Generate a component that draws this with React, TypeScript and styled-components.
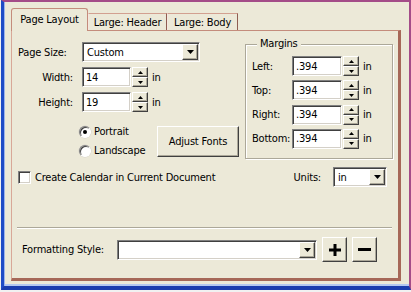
import React from 'react';
import styled, { createGlobalStyle, css } from 'styled-components';

const Global = createGlobalStyle`
  html, body { margin: 0; padding: 0; background: #F1F1F1; }
  body {
    font-family: "DejaVu Sans Condensed", "DejaVu Sans", sans-serif;
    font-stretch: condensed;
    font-size: 11px;
    letter-spacing: -0.2px;
    color: #000;
  }
  #root { width: 411px; height: 292px; overflow: hidden; }
`;

const sunken = css`
  box-sizing: border-box;
  border: 1px solid;
  border-color: #808080 #FFFFFF #FFFFFF #808080;
  box-shadow: inset 1px 1px 0 #404040, inset -1px -1px 0 #D4D0C8;
  background: #FFFFFF;
`;

const raised = css`
  box-sizing: border-box;
  border: 1px solid;
  border-color: #FFFFFF #404040 #404040 #FFFFFF;
  box-shadow: inset -1px -1px 0 #ACA899;
  background: #ECE9D8;
`;

const Frame = styled.div`
  box-sizing: border-box;
  width: 410px;
  height: 290px;
  margin-left: 1px;
  background: #ECE9D8;
  border-top: 2px solid #A44C88;
  border-right: 2px solid #A44C88;
  border-left: 3px solid #1F4CC6;
  border-bottom: 4px solid #1B3DAE;
  box-shadow: inset 1px 0 0 #9DB4EA, inset 0 -2px 0 #B4C8F0;
  display: flex;
  flex-direction: column;
  padding: 0 8px 0 7px;
`;

const TabStrip = styled.div`
  height: 28px;
  display: flex;
  align-items: flex-end;
  position: relative;
  z-index: 1;
`;

const Tab = styled.div<{ $active?: boolean; $w: number }>`
  box-sizing: border-box;
  width: ${p => p.$w}px;
  display: flex;
  align-items: center;
  justify-content: center;
  background: #ECE9D8;
  white-space: nowrap;
  ${p => p.$active ? css`
    height: 23px;
    margin-bottom: -1px;
    border: 1px solid #C48C7C;
    border-bottom: none;
    border-radius: 3px 3px 0 0;
    padding-bottom: 1px;
  ` : css`
    height: 17px;
    border-top: 1px solid #D2A090;
    border-left: 1px solid #F6E6DE;
    border-right: 1px solid #8E5E52;
    padding-top: 1px;
  `}
`;

const Panel = styled.div`
  box-sizing: border-box;
  width: 390px;
  height: 251px;
  border-top: 1px solid #C48C7C;
  border-left: 1px solid #D8A898;
  border-right: 3px solid #A66858;
  border-bottom: 3px solid #A66858;
  padding: 11px 5px 0 6px;
  display: flex;
  flex-direction: column;
`;

const TopArea = styled.div`
  display: flex;
  justify-content: space-between;
  align-items: flex-start;
`;

const LeftCol = styled.div`
  width: 221px;
  display: flex;
  flex-direction: column;
`;

const FormGrid = styled.div<{ $labelW: number; $gap: number }>`
  display: grid;
  grid-template-columns: ${p => p.$labelW}px auto;
  grid-auto-rows: 20px;
  row-gap: ${p => p.$gap}px;
  align-items: center;
`;

const Label = styled.span<{ $right?: boolean }>`
  justify-self: ${p => (p.$right ? 'end' : 'start')};
  padding-right: ${p => (p.$right ? '9px' : '0')};
  white-space: nowrap;
`;

const Field = styled.div`
  display: flex;
  align-items: center;
  height: 20px;
`;

const TextBox = styled.input<{ $w: number }>`
  ${sunken};
  width: ${p => p.$w}px;
  height: 20px;
  margin: 0;
  padding: 0 0 0 3px;
  font: inherit;
  font-stretch: condensed;
  letter-spacing: -0.2px;
  color: #000;
  outline: none;
`;

const Spin = styled.div`
  display: flex;
  flex-direction: column;
  margin-left: 1px;
  width: 16px;
  height: 20px;
`;

const SpinBtn = styled.div`
  ${raised};
  height: 10px;
  display: flex;
  align-items: center;
  justify-content: center;
`;

const Unit = styled.span`
  margin-left: 4px;
`;

const Combo = styled.div<{ $w: number }>`
  ${sunken};
  width: ${p => p.$w}px;
  height: 20px;
  padding: 1px;
  display: flex;
  align-items: stretch;
`;

const ComboText = styled.span`
  flex: 1;
  display: flex;
  align-items: center;
  padding-left: 3px;
  white-space: nowrap;
`;

const DropBtn = styled.div`
  ${raised};
  width: 16px;
  display: flex;
  align-items: center;
  justify-content: center;
`;

const Orientation = styled.div`
  margin-top: 10px;
  display: flex;
  align-items: center;
  justify-content: space-between;
`;

const RadioGroup = styled.div`
  margin-left: 61px;
  display: flex;
  flex-direction: column;
`;

const OptionRow = styled.label`
  height: 19px;
  display: flex;
  align-items: center;
  gap: 3px;
  white-space: nowrap;
`;

const Radio = styled.span<{ $checked?: boolean }>`
  box-sizing: border-box;
  width: 12px;
  height: 12px;
  border-radius: 50%;
  background: #FFFFFF;
  border: 1px solid;
  border-color: #808080 #FFFFFF #FFFFFF #808080;
  box-shadow: inset 1px 1px 0 #404040, 0 0 0 0.5px #D4D0C8;
  display: flex;
  align-items: center;
  justify-content: center;
  &::after {
    content: '';
    width: 4px;
    height: 4px;
    border-radius: 50%;
    background: ${p => (p.$checked ? '#000' : 'transparent')};
  }
`;

const PushButton = styled.div<{ $w: number; $h: number }>`
  ${raised};
  width: ${p => p.$w}px;
  height: ${p => p.$h}px;
  display: flex;
  align-items: center;
  justify-content: center;
  white-space: nowrap;
`;

const GroupBox = styled.div`
  box-sizing: border-box;
  width: 148px;
  height: 115px;
  margin-top: 2px;
  border: 1px solid #ACA899;
  box-shadow: 1px 1px 0 #FFFFFF, inset 1px 1px 0 #FFFFFF;
  display: flex;
  flex-direction: column;
`;

const Legend = styled.span`
  align-self: flex-start;
  margin: -8px 0 0 11px;
  padding: 0 3px;
  height: 13px;
  line-height: 13px;
  background: #ECE9D8;
`;

const MarginArea = styled.div`
  margin-top: 6px;
  padding-left: 6px;
`;

const CheckRow = styled.div`
  margin-top: 7px;
  height: 20px;
  display: flex;
  align-items: center;
`;

const CheckBox = styled.span`
  ${sunken};
  width: 13px;
  height: 13px;
`;

const CheckText = styled.span`
  margin-left: 4px;
  white-space: nowrap;
`;

const UnitsArea = styled.div`
  margin-left: auto;
  margin-right: 6px;
  display: flex;
  align-items: center;
  gap: 12px;
`;

const Separator = styled.div`
  margin: 40px 1px 0 -1px;
  height: 1px;
  background: #ACA899;
  border-bottom: 1px solid #FFFFFF;
`;

const FormatRow = styled.div`
  margin-top: 8px;
  height: 25px;
  display: flex;
  align-items: center;
`;

const FormatLabel = styled.span`
  width: 95px;
  margin-left: 4px;
  white-space: nowrap;
`;

const IconBtn = styled(PushButton)`
  margin-left: 5px;
`;

const Arrow = ({ w, h }: { w: number; h: number }) => (
  <svg width={w} height={h} viewBox={`0 0 ${w} ${h}`}>
    <polygon points={`0,0 ${w},0 ${w / 2},${h}`} fill="#000" />
  </svg>
);

const UpArrow = () => (
  <svg width={5} height={3} viewBox="0 0 5 3">
    <polygon points="0,3 5,3 2.5,0" fill="#000" />
  </svg>
);

const DownArrow = () => (
  <svg width={5} height={3} viewBox="0 0 5 3">
    <polygon points="0,0 5,0 2.5,3" fill="#000" />
  </svg>
);

const PlusIcon = () => (
  <svg width={12} height={12} viewBox="0 0 12 12">
    <rect x={0} y={4.5} width={12} height={3} fill="#000" />
    <rect x={4.5} y={0} width={3} height={12} fill="#000" />
  </svg>
);

const MinusIcon = () => (
  <svg width={13} height={3} viewBox="0 0 13 3">
    <rect x={0} y={0} width={13} height={3} fill="#000" />
  </svg>
);

const DropDown = ({ w, value }: { w: number; value: string }) => (
  <Combo $w={w}>
    <ComboText>{value}</ComboText>
    <DropBtn>
      <Arrow w={7} h={4} />
    </DropBtn>
  </Combo>
);

const Spinner = ({ w, value }: { w: number; value: string }) => (
  <Field>
    <TextBox $w={w} readOnly value={value} />
    <Spin>
      <SpinBtn><UpArrow /></SpinBtn>
      <SpinBtn><DownArrow /></SpinBtn>
    </Spin>
    <Unit>in</Unit>
  </Field>
);

const margins = ['Left:', 'Top:', 'Right:', 'Bottom:'];

export default function App() {
  return (
    <>
      <Global />
      <Frame>
        <TabStrip>
          <Tab $active $w={77}>Page Layout</Tab>
          <Tab $w={79}>Large: Header</Tab>
          <Tab $w={71}>Large: Body</Tab>
        </TabStrip>
        <Panel>
          <TopArea>
            <LeftCol>
              <FormGrid $labelW={64} $gap={5}>
                <Label>Page Size:</Label>
                <DropDown w={118} value="Custom" />
                <Label $right>Width:</Label>
                <Spinner w={49} value="14" />
                <Label $right>Height:</Label>
                <Spinner w={49} value="19" />
              </FormGrid>
              <Orientation>
                <RadioGroup>
                  <OptionRow><Radio $checked />Portrait</OptionRow>
                  <OptionRow><Radio />Landscape</OptionRow>
                </RadioGroup>
                <PushButton $w={82} $h={31}>Adjust Fonts</PushButton>
              </Orientation>
            </LeftCol>
            <GroupBox>
              <Legend>Margins</Legend>
              <MarginArea>
                <FormGrid $labelW={40} $gap={4.33}>
                  {margins.map(m => (
                    <React.Fragment key={m}>
                      <Label>{m}</Label>
                      <Spinner w={50} value=".394" />
                    </React.Fragment>
                  ))}
                </FormGrid>
              </MarginArea>
            </GroupBox>
          </TopArea>
          <CheckRow>
            <CheckBox />
            <CheckText>Create Calendar in Current Document</CheckText>
            <UnitsArea>
              <span>Units:</span>
              <DropDown w={54} value="in" />
            </UnitsArea>
          </CheckRow>
          <Separator />
          <FormatRow>
            <FormatLabel>Formatting Style:</FormatLabel>
            <DropDown w={200} value="" />
            <IconBtn $w={25} $h={25}><PlusIcon /></IconBtn>
            <IconBtn $w={25} $h={25}><MinusIcon /></IconBtn>
          </FormatRow>
        </Panel>
      </Frame>
    </>
  );
}
